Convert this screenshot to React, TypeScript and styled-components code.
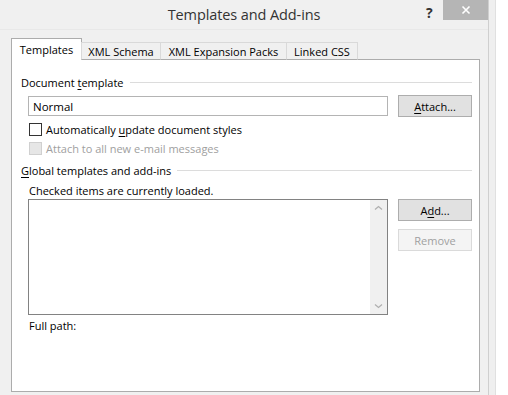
import React from "react";
import styled, { createGlobalStyle } from "styled-components";

const Global = createGlobalStyle`
  html, body { margin: 0; padding: 0; background: #ffffff; }
  body { font-family: "Open Sans", "Noto Sans", sans-serif; }
`;

const Window = styled.div`
  width: 488px;
  height: 395px;
  overflow: hidden;
  background: #f0f0f0;
  border-right: 1px solid #cfcfcf;
  box-shadow: 6px 0 0 #efefef, 7px 0 0 #e0e0e0;
  display: flex;
  flex-direction: column;
  color: #000;
  font-size: 11px;
`;

const TitleBar = styled.div`
  height: 30px;
  flex: none;
  position: relative;
  display: flex;
  align-items: center;
  justify-content: center;
  border-bottom: 1px solid #e8e8e8;
  box-sizing: border-box;
`;

const Title = styled.div`
  font-size: 14.5px;
  color: #333;
  letter-spacing: -0.1px;
`;

const HelpMark = styled.div`
  position: absolute;
  left: 426px;
  top: 3px;
  font-size: 14px;
  font-weight: 700;
  color: #333;
`;

const CloseButton = styled.div`
  position: absolute;
  left: 443px;
  top: 0;
  width: 45px;
  height: 20px;
  background: #b5b5b5;
  display: flex;
  align-items: center;
  justify-content: center;
`;

const Body = styled.div`
  padding: 8px 0 0 11px;
  display: flex;
  flex-direction: column;
`;

const TabStrip = styled.div`
  display: flex;
  align-items: flex-end;
  height: 22px;
  position: relative;
  z-index: 1;
`;

const Tab = styled.div<{ $active?: boolean; $w: number }>`
  box-sizing: border-box;
  height: ${(p) => (p.$active ? 22 : 18)}px;
  width: ${(p) => p.$w}px;
  display: flex;
  align-items: center;
  justify-content: center;
  background: ${(p) => (p.$active ? "#ffffff" : "#f0f0f0")};
  border: 1px solid ${(p) => (p.$active ? "#acacac" : "#d9d9d9")};
  border-bottom: ${(p) => (p.$active ? "none" : "1px solid #acacac")};
  margin-left: ${(p) => (p.$active ? 0 : -1)}px;
  white-space: nowrap;
  padding-top: ${(p) => (p.$active ? 0 : 1)}px;
`;

const Panel = styled.div`
  box-sizing: border-box;
  width: 469px;
  height: 333px;
  margin-top: -1px;
  background: #ffffff;
  border: 1px solid #acacac;
  display: flex;
  flex-direction: column;
  padding: 14px 7px 0 9px;
`;

const SectionHeader = styled.div<{ $mt?: number }>`
  display: flex;
  align-items: center;
  gap: 6px;
  height: 16px;
  margin-top: ${(p) => p.$mt ?? 0}px;
  white-space: nowrap;
`;

const Rule = styled.div`
  flex: 1;
  border-top: 1px solid #dcdcdc;
  margin-top: 1px;
`;

const U = styled.span`
  text-decoration: underline;
  text-underline-offset: 2px;
`;

const Row = styled.div<{ $mt?: number }>`
  display: flex;
  align-items: flex-start;
  gap: 10px;
  padding-left: 7px;
  margin-top: ${(p) => p.$mt ?? 0}px;
`;

const TextInput = styled.div`
  box-sizing: border-box;
  width: 360px;
  height: 20px;
  margin-top: 1px;
  border: 1px solid #b4b4b4;
  padding: 0 4px;
  display: flex;
  align-items: center;
  font-size: 11.5px;
`;

const Button = styled.div<{ $disabled?: boolean }>`
  box-sizing: border-box;
  width: 74px;
  height: 22px;
  background: ${(p) => (p.$disabled ? "#f4f4f4" : "#e1e1e1")};
  border: 1px solid ${(p) => (p.$disabled ? "#dadada" : "#adadad")};
  color: ${(p) => (p.$disabled ? "#a0a0a0" : "#000")};
  display: flex;
  align-items: center;
  justify-content: center;
`;

const ButtonColumn = styled.div`
  display: flex;
  flex-direction: column;
  gap: 8px;
`;

const CheckRow = styled.label<{ $disabled?: boolean; $mt?: number }>`
  display: flex;
  align-items: center;
  gap: 4px;
  height: 16px;
  padding-left: 8px;
  margin-top: ${(p) => p.$mt ?? 0}px;
  color: ${(p) => (p.$disabled ? "#a0a0a0" : "#000")};
`;

const Box = styled.span<{ $disabled?: boolean }>`
  box-sizing: border-box;
  width: 13px;
  height: 13px;
  border: 1px solid ${(p) => (p.$disabled ? "#d0d0d0" : "#333333")};
  background: ${(p) => (p.$disabled ? "#e6e6e6" : "#ffffff")};
  flex: none;
`;

const Note = styled.div<{ $mt?: number }>`
  height: 16px;
  display: flex;
  align-items: center;
  padding-left: 8px;
  margin-top: ${(p) => p.$mt ?? 0}px;
`;

const ListBox = styled.div`
  box-sizing: border-box;
  width: 360px;
  height: 116px;
  border: 1px solid #828282;
  display: flex;
  justify-content: flex-end;
`;

const ScrollBar = styled.div`
  width: 17px;
  background: #f0f0f0;
  display: flex;
  flex-direction: column;
  justify-content: space-between;
  align-items: center;
  padding: 5px 0;
`;

const Chevron = ({ down }: { down?: boolean }) => (
  <svg width="9" height="6" viewBox="0 0 9 6">
    <path
      d={down ? "M1 1.5 L4.5 4.5 L8 1.5" : "M1 4.5 L4.5 1.5 L8 4.5"}
      fill="none"
      stroke="#b0b0b0"
      strokeWidth="1.3"
    />
  </svg>
);

export default function App() {
  return (
    <>
      <Global />
      <Window>
        <TitleBar>
          <Title>Templates and Add-ins</Title>
          <HelpMark>?</HelpMark>
          <CloseButton>
            <svg width="10" height="10" viewBox="0 0 10 10">
              <path d="M1.5 1.5 L8.5 8.5 M8.5 1.5 L1.5 8.5" stroke="#ffffff" strokeWidth="1.6" />
            </svg>
          </CloseButton>
        </TitleBar>
        <Body>
          <TabStrip>
            <Tab $active $w={71}>Templates</Tab>
            <Tab $w={80}>XML Schema</Tab>
            <Tab $w={127}>XML Expansion Packs</Tab>
            <Tab $w={72}>Linked CSS</Tab>
          </TabStrip>
          <Panel>
            <SectionHeader>
              <span>
                Document <U>t</U>emplate
              </span>
              <Rule />
            </SectionHeader>
            <Row $mt={5}>
              <TextInput>Normal</TextInput>
              <Button>
                <span>
                  <U>A</U>ttach...
                </span>
              </Button>
            </Row>
            <CheckRow $mt={4}>
              <Box />
              <span>
                Automatically <U>u</U>pdate document styles
              </span>
            </CheckRow>
            <CheckRow $disabled $mt={3}>
              <Box $disabled />
              <span>Attach to all new e-mail messages</span>
            </CheckRow>
            <SectionHeader $mt={6}>
              <span>
                <U>G</U>lobal templates and add-ins
              </span>
              <Rule />
            </SectionHeader>
            <Note $mt={4}>Checked items are currently loaded.</Note>
            <Row $mt={1}>
              <ListBox>
                <ScrollBar>
                  <Chevron />
                  <Chevron down />
                </ScrollBar>
              </ListBox>
              <ButtonColumn>
                <Button>
                  <span>
                    A<U>d</U>d...
                  </span>
                </Button>
                <Button $disabled>Remove</Button>
              </ButtonColumn>
            </Row>
            <Note $mt={2}>Full path:</Note>
          </Panel>
        </Body>
      </Window>
    </>
  );
}
